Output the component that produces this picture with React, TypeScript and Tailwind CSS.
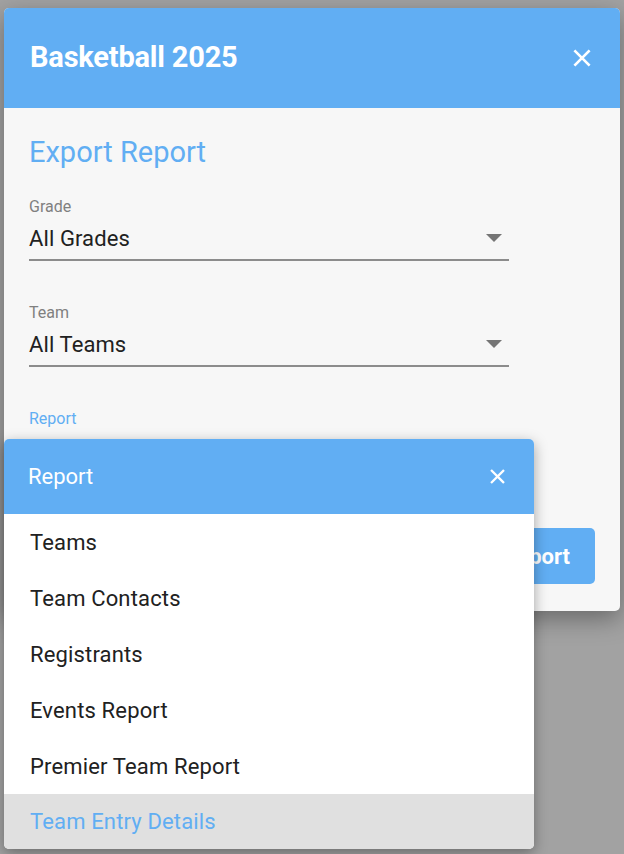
const font = { fontFamily: 'Roboto, "Noto Sans", sans-serif' };

const CloseIcon = ({ size }: { size: number }) => (
  <svg width={size} height={size} viewBox="0 0 24 24" fill="none">
    <path d="M4 4L20 20M20 4L4 20" stroke="white" strokeWidth="3.2" strokeLinecap="square" />
  </svg>
);

const Caret = () => (
  <svg width="16" height="8" viewBox="0 0 16 8">
    <path d="M0 0H16L8 8Z" fill="#757575" />
  </svg>
);

const SelectField = ({ label, value }: { label: string; value: string }) => (
  <div className="w-[480px]">
    <div className="text-[16px] leading-[20px] text-[#808080]">{label}</div>
    <div className="flex items-center justify-between h-[42px] pr-[7px]">
      <span className="text-[22px] text-[#212121] tracking-[0.1px]">{value}</span>
      <Caret />
    </div>
    <div className="h-[2px] bg-[#8c8c8c]" />
  </div>
);

const items = ['Teams', 'Team Contacts', 'Registrants', 'Events Report', 'Premier Team Report', 'Team Entry Details'];

export default function App() {
  return (
    <div className="relative min-h-[854px] bg-[#a2a2a2] pt-[8px] px-[4px] overflow-hidden" style={font}>
      <div className="w-[616px] h-[603px] rounded-[5px] bg-[#f7f7f7] overflow-hidden shadow-[0_8px_24px_rgba(0,0,0,0.35)]">
        <div className="h-[100px] bg-[#61aef3] flex items-center justify-between pl-[26px] pr-[28px]">
          <h1 className="text-[29px] font-bold text-white tracking-[-0.2px]">Basketball 2025</h1>
          <CloseIcon size={20} />
        </div>
        <div className="pl-[25px] pt-[26px]">
          <h2 className="text-[29px] leading-[36px] text-[#61aef3]">Export Report</h2>
          <div className="mt-[27px]">
            <SelectField label="Grade" value="All Grades" />
          </div>
          <div className="mt-[42px]">
            <SelectField label="Team" value="All Teams" />
          </div>
          <div className="mt-[42px] text-[16px] leading-[20px] text-[#61aef3]">Report</div>
          <div className="flex justify-end pr-[25px] mt-[99px]">
            <button className="h-[56px] px-[25px] rounded-[5px] bg-[#61aef3] text-white text-[22px] font-bold">
              Export Report
            </button>
          </div>
        </div>
      </div>

      <div className="absolute left-[4px] top-[439px] w-[530px] rounded-[5px] overflow-hidden bg-white shadow-[0_4px_14px_rgba(0,0,0,0.35)]">
        <div className="h-[75px] bg-[#61aef3] flex items-center justify-between pl-[24px] pr-[28px]">
          <span className="text-[22px] text-white">Report</span>
          <CloseIcon size={17} />
        </div>
        {items.map((item, i) => {
          const selected = i === items.length - 1;
          return (
            <div
              key={item}
              className={
                selected
                  ? 'h-[55px] flex items-center pl-[26px] text-[22px] tracking-[0.15px] bg-[#e0e0e0] text-[#61aef3]'
                  : 'h-[56px] flex items-center pl-[26px] text-[22px] tracking-[0.15px] text-[#212121]'
              }
            >
              {item}
            </div>
          );
        })}
      </div>
    </div>
  );
}
